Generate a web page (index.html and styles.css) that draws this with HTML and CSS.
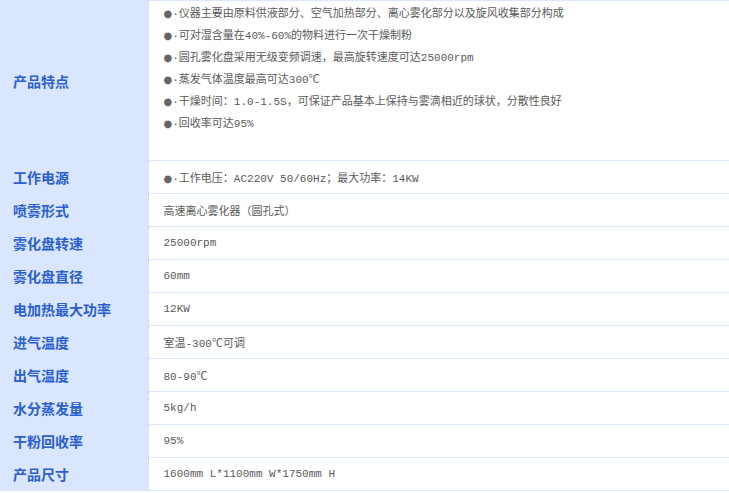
FILE: index.html
```html
<!DOCTYPE html>
<html lang="zh-CN">
<head>
  <meta charset="UTF-8" />
  <meta name="viewport" content="width=device-width, initial-scale=1.0" />
  <title>产品参数</title>
  <link rel="stylesheet" href="styles.css">
</head>
<body>

  <table class="params">
    <tr class="row-tall">
      <th>产品特点</th>
      <td>
        <p><span class="dot">●</span>·仪器主要由原料供液部分、空气加热部分、离心雾化部分以及旋风收集部分构成</p>
        <p><span class="dot">●</span>·可对湿含量在40%-60%的物料进行一次干燥制粉</p>
        <p><span class="dot">●</span>·圆孔雾化盘采用无级变频调速，最高旋转速度可达25000rpm</p>
        <p><span class="dot">●</span>·蒸发气体温度最高可达300℃</p>
        <p><span class="dot">●</span>·干燥时间：1.0-1.5S，可保证产品基本上保持与雾滴相近的球状，分散性良好</p>
        <p><span class="dot">●</span>·回收率可达95%</p>
      </td>
    </tr>
    <tr>
      <th>工作电源</th>
      <td><span class="dot">●</span>·工作电压：AC220V 50/60Hz；最大功率：14KW</td>
    </tr>
    <tr>
      <th>喷雾形式</th>
      <td>高速离心雾化器（圆孔式）</td>
    </tr>
    <tr>
      <th>雾化盘转速</th>
      <td>25000rpm</td>
    </tr>
    <tr>
      <th>雾化盘直径</th>
      <td>60mm</td>
    </tr>
    <tr>
      <th>电加热最大功率</th>
      <td>12KW</td>
    </tr>
    <tr>
      <th>进气温度</th>
      <td>室温-300℃可调</td>
    </tr>
    <tr>
      <th>出气温度</th>
      <td>80-90℃</td>
    </tr>
    <tr>
      <th>水分蒸发量</th>
      <td>5kg/h</td>
    </tr>
    <tr>
      <th>干粉回收率</th>
      <td>95%</td>
    </tr>
    <tr>
      <th>产品尺寸</th>
      <td>1600mm L*1100mm W*1750mm H</td>
    </tr>
  </table>

</body>
</html>
```

FILE: styles.css
```css
body {
  margin: 0;
  background: #fff;
}
.params {
  width: 100%;
  border-collapse: collapse;
}
.params th,
.params td {
  border-top: 1px solid #dbe7fc;
  border-bottom: 1px solid #dbe7fc;
  height: 33px;
  box-sizing: border-box;
}
.params th {
  width: 148px;
  padding: 0 0 0 13px;
  background: #d9e6fd;
  border-right: 1px dotted #b8c9e6;
  text-align: left;
  font-family: "Noto Sans CJK SC", sans-serif;
  font-size: 14px;
  font-weight: bold;
  color: #2a5fcf;
}
.params td {
  padding: 0 15px;
  font-family: "Liberation Mono", "Noto Sans CJK SC", monospace;
  font-size: 11px;
  color: #5a5a5a;
}
.params p {
  margin: 0;
  line-height: 22px;
}
.row-tall th,
.row-tall td {
  height: 160px;
}
.row-tall td {
  vertical-align: top;
  padding-top: 2px;
}
.dot {
  color: #666;
  font-family: "DejaVu Sans", sans-serif;
  font-size: 10px;
}
```
